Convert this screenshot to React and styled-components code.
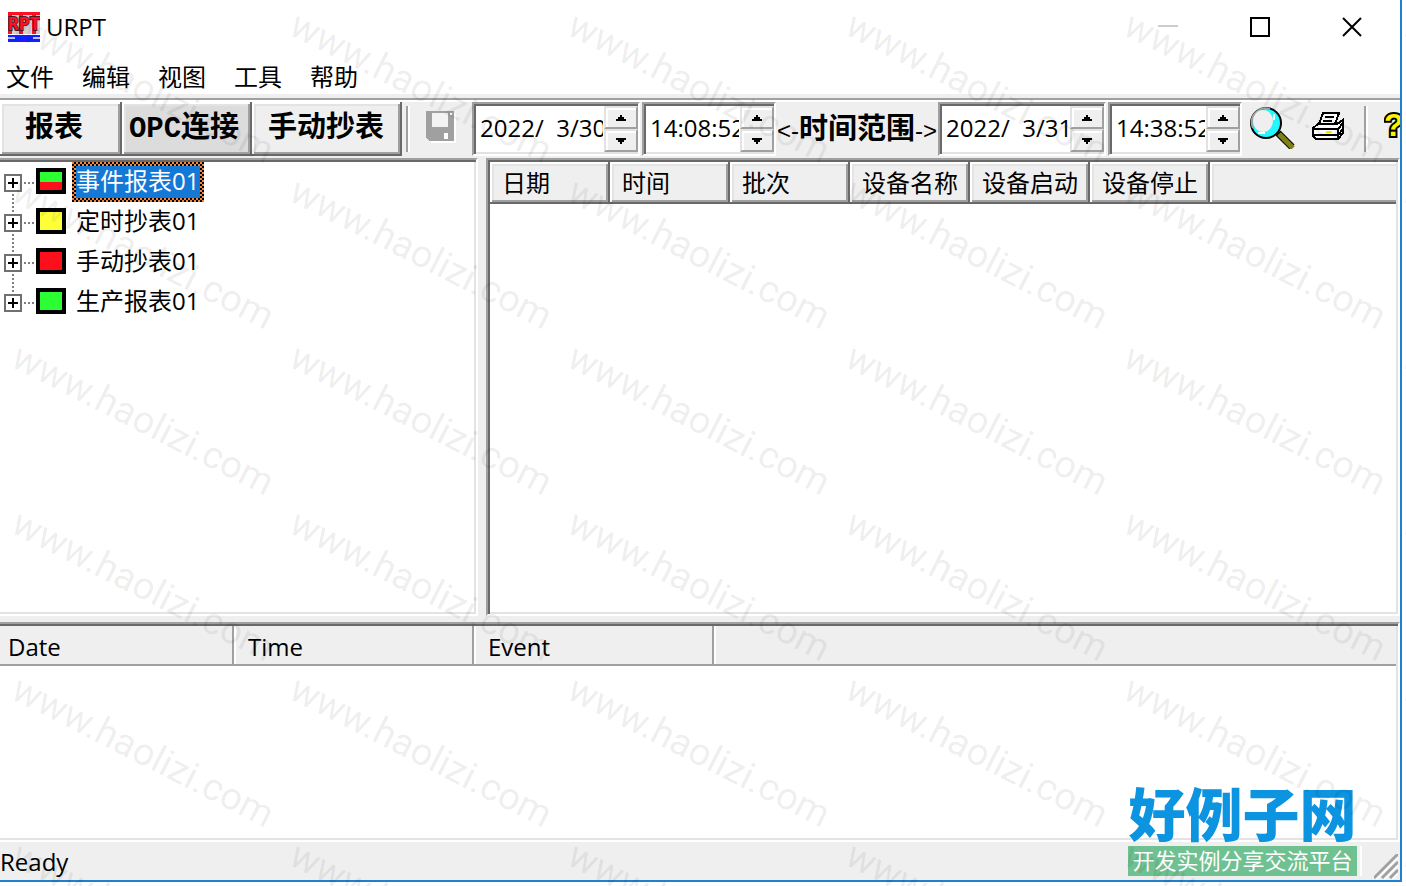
import React from "react";
import styled, { createGlobalStyle, css } from "styled-components";

const c = {
  face: "#efefef",
  light: "#e3e3e3",
  shadow: "#a0a0a0",
  dark: "#696969",
  accent: "#1f80d0",
};

const uiFont = '"Open Sans", "Noto Sans CJK SC", sans-serif';
const boldFont = '"Liberation Mono", "Noto Sans CJK SC", monospace';

const Global = createGlobalStyle`
  *, *::before, *::after { box-sizing: border-box; }
  html, body, #root { height: 100%; }
  body { margin: 0; background: #fff; overflow: hidden; }
  body, button, input { font-family: ${uiFont}; font-size: 24px; line-height: 32px; color: #000; }
  button, input { margin: 0; padding: 0; border: 0; border-radius: 0; background: none; }
`;

const raised = css`
  border: 0 solid ${c.dark};
  border-width: 0 2px 2px 0;
  box-shadow: inset 2px 2px #fff, inset -2px -2px ${c.shadow}, inset 4px 4px ${c.light};
`;

const sunken = css`
  padding: 2px;
  border: 2px solid;
  border-color: ${c.shadow} #fff #fff ${c.shadow};
  box-shadow: inset 2px 2px ${c.dark}, inset -2px -2px ${c.light};
  background: #fff;
`;

const Screen = styled.div`
  position: relative;
  height: 100%;
  padding: 0 4px 4px 0;
  overflow: hidden;
`;

const Window = styled.div`
  display: flex;
  flex-direction: column;
  height: 100%;
  border: 0 solid ${c.accent};
  border-width: 0 2px 2px 0;
  overflow: hidden;
`;

const TitleBar = styled.header`
  display: flex;
  align-items: center;
  flex: none;
  height: 56px;
  padding: 0 2px 2px 8px;
  gap: 6px;
`;

const Title = styled.h1`
  flex: 1;
  margin: 0;
  font-size: 24px;
  font-weight: 400;
`;

const CaptionButtons = styled.div`
  display: flex;
`;

const CaptionButton = styled.button`
  display: grid;
  place-items: center;
  width: 92px;
  height: 52px;
`;

const MenuBar = styled.nav`
  display: flex;
  flex: none;
  gap: 28px;
  height: 42px;
  padding: 4px 6px 0;
  border-bottom: 4px solid ${c.face};
`;

const MenuItem = styled.button`
  height: 34px;
`;

const ToolBar = styled.div`
  display: flex;
  align-items: flex-start;
  flex: none;
  height: 60px;
  padding: 2px 0;
  border-top: 2px solid ${c.shadow};
  box-shadow: inset 0 2px #fff;
  background: ${c.face};
  overflow: hidden;
`;

const ToolButton = styled.button`
  ${raised}
  flex: none;
  width: ${(p) => p.$width}px;
  height: 54px;
  padding: 4px ${(p) => p.$inset || 0}px 0 0;
  font-family: ${boldFont};
  font-size: 29px;
  font-weight: 700;
  white-space: nowrap;
  background: ${(p) => (p.$active ? "#dcdcdc" : c.face)};
`;

const Divider = styled.span`
  flex: none;
  width: 4px;
  height: 46px;
  margin: 4px ${(p) => p.$after}px 0 ${(p) => p.$before}px;
  background: linear-gradient(90deg, ${c.shadow} 50%, #fff 50%);
`;

const IconButton = styled.button`
  display: flex;
  align-items: center;
  flex: none;
  width: ${(p) => p.$width}px;
  height: 50px;
`;

const Field = styled.div`
  ${sunken}
  display: flex;
  flex: none;
  width: ${(p) => p.$width}px;
  height: 54px;
  padding-right: 0;
  margin-right: ${(p) => p.$after || 0}px;
`;

const FieldInput = styled.input`
  flex: 1;
  min-width: 0;
  height: 44px;
  padding: 0 1px 2px 4px;
  outline: 0;
`;

const Spinner = styled.div`
  display: flex;
  flex-direction: column;
  flex: none;
  width: 34px;
`;

const SpinButton = styled.button`
  display: grid;
  place-items: center;
  flex: 1;
  border: 2px solid;
  border-color: ${c.light} ${c.shadow} ${c.shadow} ${c.light};
  box-shadow: inset 2px 2px #fff;
  background: ${c.face};
`;

const RangeLabel = styled.span`
  flex: none;
  width: 162px;
  text-align: center;
  font-family: "Liberation Sans", "Noto Sans CJK SC", sans-serif;
  font-size: 29px;
  font-weight: 700;
  line-height: 54px;
  white-space: nowrap;
`;

const RangeArrow = styled.span`
  font-size: 24px;
  font-weight: 400;
`;

const Panes = styled.main`
  display: flex;
  flex: 1;
  min-height: 0;
  gap: 8px;
  background: ${c.face};
`;

const TreePane = styled.section`
  ${sunken}
  flex: none;
  width: 478px;
  padding: 2px 2px 2px 0;
  border-left: 0;
  box-shadow: inset 0 2px ${c.dark}, inset -2px -2px ${c.light};
`;

const Tree = styled.ul`
  margin: 0;
  padding: 0;
  list-style: none;
`;

const TreeRow = styled.li`
  display: flex;
  align-items: center;
  height: 40px;
  padding-left: 4px;
  background: repeating-linear-gradient(#808080 0 2px, #fff 2px 4px) no-repeat 12px 0 / 2px 100%;
  &:first-child { background-position: 12px 100%; background-size: 2px 50%; }
  &:last-child { background-size: 2px 50%; }
`;

const Expander = styled.button`
  display: grid;
  place-items: center;
  width: 18px;
  height: 18px;
  margin-top: 2px;
  border: 2px solid #707070;
  background: #fff;
`;

const Branch = styled.span`
  width: 10px;
  height: 2px;
  margin: 2px 2px 0;
  background: repeating-linear-gradient(90deg, #808080 0 2px, #fff 2px 4px);
`;

const Swatch = styled.span`
  width: 30px;
  height: 26px;
  margin: 0 6px 2px 0;
  border: 4px solid #000;
  background: ${(p) => p.$fill};
`;

const TreeLabel = styled.span`
  height: 40px;
  padding-right: 1px;
  border: 4px solid transparent;
  line-height: 30px;
  ${(p) =>
    p.$selected &&
    css`
      color: #fff;
      background:
        linear-gradient(#1478d7, #1478d7) padding-box,
        repeating-conic-gradient(#000 0 25%, #f58638 0 50%) 0 0 / 4px 4px border-box;
    `}
`;

const ListPane = styled.section`
  ${sunken}
  flex: 1;
  min-width: 0;
`;

const Grid = styled.table`
  width: 100%;
  table-layout: fixed;
  border-collapse: separate;
  border-spacing: 0;
`;

const GridHead = styled.th`
  ${raised}
  width: ${(p) => (p.$width ? p.$width + "px" : "auto")};
  height: 42px;
  padding: 2px 0 0 12px;
  font-weight: 400;
  text-align: left;
  white-space: nowrap;
  background: ${c.face};
  &:last-child { border-right: 0; box-shadow: inset 2px 2px #fff, inset 0 -2px ${c.shadow}, inset 4px 4px ${c.light}; }
`;

const LogPane = styled.section`
  ${sunken}
  flex: none;
  height: 220px;
  padding: 2px 2px 2px 0;
  border-left: 0;
  box-shadow: inset 0 2px ${c.dark}, inset -2px -2px ${c.light};
`;

const Splitter = styled.div`
  flex: none;
  height: 6px;
  background: ${c.face};
`;

const LogHead = styled.th`
  width: ${(p) => (p.$width ? p.$width + "px" : "auto")};
  height: 40px;
  padding: 4px 0 0 ${(p) => p.$inset}px;
  border-bottom: 2px solid ${c.shadow};
  border-right: 2px solid ${c.shadow};
  box-shadow: inset 2px 0 ${(p) => (p.$first ? c.face : "#fff")};
  font-weight: 400;
  text-align: left;
  background: ${c.face};
  &:last-child { border-right: 0; }
`;

const StatusBar = styled.footer`
  display: flex;
  align-items: flex-end;
  justify-content: space-between;
  flex: none;
  height: 38px;
  padding-right: 2px;
  line-height: 36px;
  background: ${c.face};
`;

const Brand = styled.aside`
  position: absolute;
  right: 49px;
  bottom: 10px;
  width: 229px;
  font-family: "Noto Sans CJK SC", sans-serif;
  text-align: center;
  white-space: nowrap;
`;

const BrandName = styled.div`
  font-size: 57px;
  font-weight: 900;
  line-height: 70px;
  color: #0c94e0;
`;

const BrandLine = styled.div`
  height: 30px;
  font-size: 22px;
  line-height: 26px;
  color: #fff;
  background: #6fc191;
  box-shadow: 3px 0 ${c.face}, 5px 0 #fff;
`;

const Watermark = styled.div`
  position: absolute;
  inset: 0;
  display: grid;
  grid-template-columns: repeat(6, 278px);
  grid-auto-rows: 166px;
  padding: 4px 0 0 24px;
  overflow: hidden;
  pointer-events: none;
  font-family: Roboto, sans-serif;
  font-size: 38px;
  line-height: 40px;
  color: rgba(0, 0, 0, 0.08);
`;

const Mark = styled.span`
  transform: rotate(27deg);
  transform-origin: 0 0;
  width: max-content;
  height: 40px;
`;

function AppIcon() {
  return (
    <svg width="32" height="30" viewBox="0 0 32 30" aria-hidden="true">
      <rect y="23" width="32" height="7" fill="#1220ff" />
      <rect y="25" width="7" height="2" fill="#b9c4ff" />
      <rect x="25" y="25" width="7" height="2" fill="#b9c4ff" />
      <rect width="32" height="22" fill="#d9cfd2" />
      <path d="M0 1H32M2 3V22M13 3V22M26 3V22" stroke="#ff0f1f" strokeWidth="4" />
      <text x="16" y="18" textAnchor="middle" fontFamily="DejaVu Sans Mono" fontWeight="700" fontSize="18" fill="#ff0f1f" stroke="#4a1a24" strokeWidth="2" paintOrder="stroke">RPT</text>
    </svg>
  );
}

function SaveIcon() {
  return (
    <svg width="30" height="32" viewBox="0 0 30 32" shapeRendering="crispEdges" aria-hidden="true">
      <path d="M3 3H30V32H5V30H3Z" fill="#fff" />
      <path d="M0 0H28V30H3L0 27Z" fill="#a0a0a0" />
      <path d="M6 2H22V16H6Z" fill="#f2f2f2" />
      <path d="M24 2H26V4H24ZM18 22H22V28H18Z" fill="#fff" />
    </svg>
  );
}

function SearchIcon() {
  return (
    <svg width="46" height="44" viewBox="0 0 46 44" aria-hidden="true">
      <path d="M28 28L42 42" stroke="#000" strokeWidth="7" />
      <path d="M29 29L43 43" stroke="#808018" strokeWidth="5" />
      <circle cx="16" cy="18" r="15" fill="#22f6ff" stroke="#000" strokeWidth="2" />
      <path d="M3 23A14 14 0 0 1 20 4" fill="none" stroke="#a0a0a0" strokeWidth="2" />
      <ellipse cx="13" cy="16" rx="10" ry="11" fill="#efefef" />
      <path d="M24 9V15M8 28H15" stroke="#fff" strokeWidth="2" />
    </svg>
  );
}

function PrintIcon() {
  return (
    <svg width="34" height="30" viewBox="0 0 34 30" shapeRendering="crispEdges" aria-hidden="true">
      <path d="M7 12L11 1H27L23 12Z" fill="#fff" stroke="#000" strokeWidth="2" />
      <path d="M13 5H22M11 9H20" stroke="#000" strokeWidth="2" />
      <path d="M1 16L6 12H25L31 8V21L26 27H4L1 24Z" fill="#fff" stroke="#000" strokeWidth="2" />
      <path d="M1 17H26L31 11M1 23H26L31 17M26 17V27" fill="none" stroke="#000" strokeWidth="2" />
      <path d="M14 20H20" stroke="#f4e800" strokeWidth="2" />
    </svg>
  );
}

function HelpIcon() {
  return (
    <svg width="22" height="34" viewBox="0 0 22 34" aria-hidden="true">
      <text x="0" y="26" fontFamily="Liberation Sans" fontWeight="700" fontSize="32" fill="#fff200" stroke="#000" strokeWidth="4" paintOrder="stroke">?</text>
    </svg>
  );
}

function Arrow({ down }) {
  return (
    <svg width="10" height="6" viewBox="0 0 10 6" shapeRendering="crispEdges" aria-hidden="true">
      <path d={down ? "M0 0H10V2H8V4H6V6H4V4H2V2H0Z" : "M4 0H6V2H8V4H10V6H0V4H2V2H4Z"} />
    </svg>
  );
}

function SpinField({ label, value, width, after }) {
  return (
    <Field $width={width} $after={after}>
      <FieldInput aria-label={label} defaultValue={value} />
      <Spinner>
        <SpinButton type="button" aria-label={label + " +"}><Arrow /></SpinButton>
        <SpinButton type="button" aria-label={label + " -"}><Arrow down /></SpinButton>
      </Spinner>
    </Field>
  );
}

const menus = ["文件", "编辑", "视图", "工具", "帮助"];
const reports = [
  { name: "事件报表01", fill: "linear-gradient(#2bff33 0 10px, #ff0f1b 10px)", selected: true },
  { name: "定时抄表01", fill: "#ffff38" },
  { name: "手动抄表01", fill: "#ff0f1b" },
  { name: "生产报表01", fill: "#2bff33" },
];
const columns = ["日期", "时间", "批次", "设备名称", "设备启动", "设备停止"];
const logColumns = [
  { name: "Date", width: 234, inset: 8 },
  { name: "Time", width: 240, inset: 14 },
  { name: "Event", width: 240, inset: 14 },
];

export default function App() {
  return (
    <Screen>
      <Global />
      <Window>
        <TitleBar>
          <AppIcon />
          <Title>URPT</Title>
          <CaptionButtons>
            <CaptionButton type="button" aria-label="Minimize">
              <svg width="20" height="20"><path d="M0 9H20" stroke="#ccc" strokeWidth="2" /></svg>
            </CaptionButton>
            <CaptionButton type="button" aria-label="Maximize">
              <svg width="20" height="20"><path d="M1 1H19V19H1Z" fill="none" stroke="#000" strokeWidth="2" /></svg>
            </CaptionButton>
            <CaptionButton type="button" aria-label="Close">
              <svg width="20" height="20"><path d="M1 1L19 19M19 1L1 19" stroke="#000" strokeWidth="2" /></svg>
            </CaptionButton>
          </CaptionButtons>
        </TitleBar>
        <MenuBar>
          {menus.map((m) => <MenuItem type="button" key={m}>{m}</MenuItem>)}
        </MenuBar>
        <ToolBar>
          <ToolButton type="button" $width={122} $inset={12}>报表</ToolButton>
          <ToolButton type="button" $width={130} $inset={4} $active>OPC连接</ToolButton>
          <ToolButton type="button" $width={150}>手动抄表</ToolButton>
          <Divider $before={4} $after={16} />
          <IconButton type="button" aria-label="Save" $width={46}><SaveIcon /></IconButton>
          <SpinField label="Start date" value="2022/  3/30" width={168} after={2} />
          <SpinField label="Start time" value="14:08:52" width={134} />
          <RangeLabel>
            <RangeArrow>&lt;-</RangeArrow>时间范围<RangeArrow>-&gt;</RangeArrow>
          </RangeLabel>
          <SpinField label="End date" value="2022/  3/31" width={168} after={2} />
          <SpinField label="End time" value="14:38:52" width={134} after={8} />
          <IconButton type="button" aria-label="Search" $width={62}><SearchIcon /></IconButton>
          <IconButton type="button" aria-label="Print" $width={34}><PrintIcon /></IconButton>
          <Divider $before={18} $after={16} />
          <IconButton type="button" aria-label="Help" $width={22}><HelpIcon /></IconButton>
        </ToolBar>
        <Panes>
          <TreePane>
            <Tree>
              {reports.map((r) => (
                <TreeRow key={r.name}>
                  <Expander type="button" aria-label={"Expand " + r.name}>
                    <svg width="10" height="10"><path d="M0 5H10M5 0V10" stroke="#000" strokeWidth="2" /></svg>
                  </Expander>
                  <Branch />
                  <Swatch $fill={r.fill} />
                  <TreeLabel $selected={r.selected}>{r.name}</TreeLabel>
                </TreeRow>
              ))}
            </Tree>
          </TreePane>
          <ListPane>
            <Grid>
              <thead>
                <tr>
                  {columns.map((name) => <GridHead key={name} $width={120}>{name}</GridHead>)}
                  <GridHead />
                </tr>
              </thead>
            </Grid>
          </ListPane>
        </Panes>
        <Splitter />
        <LogPane>
          <Grid>
            <thead>
              <tr>
                {logColumns.map((l, i) => (
                  <LogHead key={l.name} $width={l.width} $inset={l.inset} $first={i === 0}>{l.name}</LogHead>
                ))}
                <LogHead $inset={0} />
              </tr>
            </thead>
          </Grid>
        </LogPane>
        <StatusBar>
          <span>Ready</span>
          <svg width="24" height="26" aria-hidden="true">
            <path d="M2 25L24 3M10 25L24 11M18 25L24 19" stroke="#fff" strokeWidth="2" />
            <path d="M0 24L24 0M8 24L24 8M16 24L24 16" stroke="#a0a0a0" strokeWidth="3" />
          </svg>
        </StatusBar>
      </Window>
      <Brand>
        <BrandName>好例子网</BrandName>
        <BrandLine>开发实例分享交流平台</BrandLine>
      </Brand>
      <Watermark aria-hidden="true">
        {Array.from({ length: 36 }, (_, i) => <Mark key={i}>www.haolizi.com</Mark>)}
      </Watermark>
    </Screen>
  );
}
